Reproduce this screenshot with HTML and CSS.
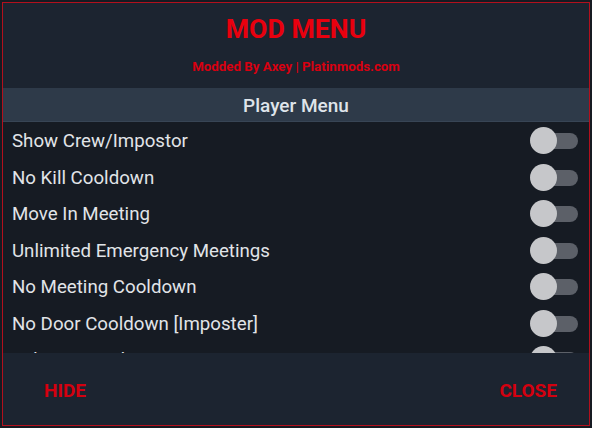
FILE: index.html
```html
<!DOCTYPE html>
<html>
<head>
<meta charset="utf-8">
<link rel="stylesheet" href="styles.css">
</head>
<body>
<div class="frame">
  <div class="panel">
    <header class="head">
      <div class="title">MOD MENU</div>
      <div class="subtitle">Modded By Axey | Platinmods.com</div>
    </header>
    <div class="section">Player Menu</div>
    <div class="list">
      <div class="row"><span class="label">Show Crew/Impostor</span><span class="toggle"><span class="track"></span><span class="thumb"></span></span></div>
      <div class="row"><span class="label">No Kill Cooldown</span><span class="toggle"><span class="track"></span><span class="thumb"></span></span></div>
      <div class="row"><span class="label">Move In Meeting</span><span class="toggle"><span class="track"></span><span class="thumb"></span></span></div>
      <div class="row"><span class="label">Unlimited Emergency Meetings</span><span class="toggle"><span class="track"></span><span class="thumb"></span></span></div>
      <div class="row"><span class="label">No Meeting Cooldown</span><span class="toggle"><span class="track"></span><span class="thumb"></span></span></div>
      <div class="row"><span class="label">No Door Cooldown [Imposter]</span><span class="toggle"><span class="track"></span><span class="thumb"></span></span></div>
      <div class="row"><span class="label">Sabotage Lights</span><span class="toggle"><span class="track"></span><span class="thumb"></span></span></div>
    </div>
    <footer class="foot">
      <span class="btn">HIDE</span>
      <span class="btn">CLOSE</span>
    </footer>
  </div>
</div>
</body>
</html>
```
FILE: styles.css
```css
html, body {
  margin: 0;
  padding: 0;
  background: #12161c;
}
.frame {
  width: 592px;
  height: 428px;
  box-sizing: border-box;
  padding: 2px;
  background: #161b22;
}
.panel {
  height: 100%;
  box-sizing: border-box;
  border: 1px solid #b3101d;
  display: flex;
  flex-direction: column;
  font-family: Roboto, "Liberation Sans", sans-serif;
  background: #161b23;
  overflow: hidden;
}
.head {
  height: 85px;
  flex: none;
  background: #1c2430;
  display: flex;
  flex-direction: column;
  align-items: center;
}
.title {
  margin-top: 11px;
  font-size: 26.7px;
  font-weight: 700;
  color: #e8000e;
  line-height: 30px;
}
.subtitle {
  margin-top: 15px;
  font-size: 13.3px;
  font-weight: 700;
  color: #d80010;
  line-height: 15px;
}
.section {
  height: 34px;
  flex: none;
  box-sizing: border-box;
  background: #2e3a49;
  border-bottom: 1px solid #384555;
  color: #dfe4ea;
  font-size: 19px;
  font-weight: 500;
  display: flex;
  align-items: center;
  justify-content: center;
  padding-top: 1px;
}
.list {
  flex: 1;
  overflow: hidden;
  padding-top: 1px;
  background: #161b23;
}
.row {
  height: 36.5px;
  display: flex;
  align-items: center;
  justify-content: space-between;
  padding: 0 11px 0 9px;
}
.label {
  color: #e1e4e8;
  font-size: 18.7px;
}
.toggle {
  position: relative;
  width: 48px;
  height: 28px;
}
.track {
  position: absolute;
  right: 0;
  top: 6px;
  width: 36px;
  height: 16px;
  border-radius: 8px;
  background: #5c6068;
}
.thumb {
  position: absolute;
  left: 0;
  top: 0;
  width: 27px;
  height: 27px;
  border-radius: 50%;
  background: #c6c7ca;
}
.foot {
  height: 72px;
  flex: none;
  background: #1c2430;
  display: flex;
  align-items: center;
  justify-content: space-between;
  padding: 0 32px 0 41px;
}
.btn {
  color: #d4000f;
  font-size: 19px;
  font-weight: 700;
  margin-top: 3px;
}
```
